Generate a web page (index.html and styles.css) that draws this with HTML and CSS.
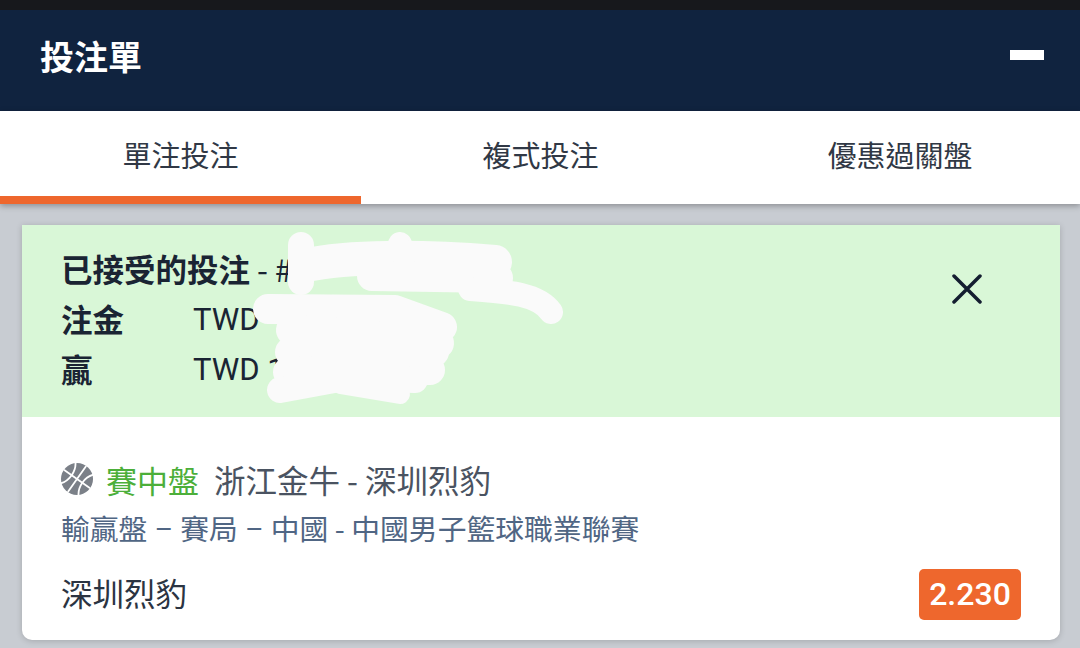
FILE: index.html

```html
<!DOCTYPE html>
<html lang="zh-Hant">
<head>
    <meta charset="UTF-8">
    <meta name="viewport" content="width=device-width, initial-scale=1.0">
    <title>投注單</title>
    <link rel="stylesheet" href="styles.css">
</head>
<body>
    <div class="topbar"></div>
    <header class="slip-header">
        <h1>投注單</h1>
        <span class="minimize"></span>
    </header>
    <nav class="tabs">
        <div class="tab active">單注投注</div>
        <div class="tab">複式投注</div>
        <div class="tab">優惠過關盤</div>
    </nav>
    <main class="content">
        <section class="card">
            <div class="accepted">
                <div class="accepted-info">
                    <div class="accepted-title"><strong>已接受的投注</strong> - #</div>
                    <div class="accepted-row"><strong>注金</strong><span>TWD</span></div>
                    <div class="accepted-row"><strong>贏</strong><span>TWD 1</span></div>
                </div>
                <svg class="close" viewBox="0 0 30 30" width="30" height="30">
                    <path d="M2 2 L28 28 M28 2 L2 28" stroke="#141e30" stroke-width="3.5" stroke-linecap="round" fill="none"/>
                </svg>
                <!-- hand drawn scribble hiding the numbers, viewBox is in page coordinates -->
                <svg class="scribble" viewBox="250 228 320 184" width="320" height="184">
                    <g stroke="#fafafa" stroke-linecap="round" stroke-linejoin="round" fill="none">
                        <path stroke-width="26" d="M301 245 V282"/>
                        <path stroke-width="24" d="M400 244 L402 270"/>
                        <path stroke-width="34" d="M312 264 C360 256 420 256 495 262"/>
                        <path stroke-width="30" d="M372 276 L498 278"/>
                        <path stroke-width="24" d="M470 289 C510 292 538 294 551 312"/>
                        <path stroke-width="30" d="M268 309 L395 310 L442 327"/>
                        <path stroke-width="32" d="M292 330 L438 343"/>
                        <path stroke-width="30" d="M290 352 L434 352"/>
                        <path stroke-width="30" d="M288 372 L430 370"/>
                        <path stroke-width="26" d="M280 390 L345 378 L415 380"/>
                        <path stroke-width="20" d="M340 384 L400 394"/>
                    </g>
                </svg>
            </div>
            <div class="bet">
                <div class="bet-match">
                    <svg class="ball" viewBox="0 0 32 32" width="32" height="32">
                        <circle cx="16" cy="16" r="16" fill="#7b8088"/>
                        <g transform="rotate(35 16 16)" stroke="#fff" stroke-width="1.8" fill="none">
                            <path d="M16 0 V32 M0 16 H32"/>
                            <path d="M5 3 C11 10 11 22 5 29"/>
                            <path d="M27 3 C21 10 21 22 27 29"/>
                        </g>
                    </svg>
                    <span class="live">賽中盤</span>
                    <span class="match-name">浙江金牛 - 深圳烈豹</span>
                </div>
                <div class="bet-market">輸贏盤 <span class="dash">−</span> 賽局 <span class="dash">−</span> 中國 - 中國男子籃球職業聯賽</div>
                <div class="bet-pick">
                    <span>深圳烈豹</span>
                    <span class="odds">2.230</span>
                </div>
            </div>
        </section>
    </main>
</body>
</html>
```

FILE: styles.css

```css
* {
    box-sizing: border-box;
}
html, body {
    margin: 0;
    height: 100%;
    overflow: hidden;
}
body {
    font-family: "Noto Sans CJK TC", "Noto Sans", sans-serif;
    background-color: #c8ccd2;
    color: #1a2433;
}
.topbar {
    height: 10px;
    background: #17181c;
}
.slip-header {
    height: 101px;
    background: #10233f;
    color: #fff;
    display: flex;
    align-items: center;
    justify-content: space-between;
    padding: 0 36px 0 40px;
}
.slip-header h1 {
    margin: 0 0 8px;
    font-size: 34px;
    line-height: 1.2;
    font-weight: 700;
}
.minimize {
    width: 34px;
    height: 10px;
    background: #fff;
    margin-bottom: 12px;
}
.tabs {
    height: 93px;
    display: grid;
    grid-template-columns: 361px 1fr 360px;
    background: #fff;
    box-shadow: 0 2px 6px rgba(0, 0, 0, 0.3);
}
.tab {
    font-size: 29px;
    line-height: 1;
    text-align: center;
    padding-top: 29px;
    color: #303845;
}
.tab.active {
    border-bottom: 8px solid #ee672d;
}
.content {
    padding: 21px 20px 0 22px;
}
.card {
    background: #fff;
    border-radius: 0 0 10px 10px;
    height: 415px;
    box-shadow: 0 1px 6px rgba(0, 0, 0, 0.18);
    overflow: hidden;
}
.accepted {
    position: relative;
    height: 192px;
    background: #d9f7d7;
    padding: 18px 39px;
    font-size: 31.5px;
    line-height: 50px;
}
.accepted strong {
    font-weight: 700;
}
.accepted-title {
    white-space: nowrap;
}
.accepted-row {
    display: grid;
    grid-template-columns: 132px 1fr;
}
.accepted-row span {
    font-family: "Roboto", sans-serif;
    font-size: 31px;
    line-height: 46px;
    padding-top: 4px;
}
.close {
    position: absolute;
    top: 49px;
    right: 78px;
}
.scribble {
    position: absolute;
    left: 228px;
    top: 3px;
}
.bet {
    padding: 37px 39px 0;
}
.bet-match {
    display: flex;
    align-items: center;
    height: 50px;
    font-size: 31px;
    white-space: nowrap;
}
.ball {
    margin-right: 13px;
    flex: none;
}
.live {
    color: #4caf3a;
    margin-right: 15px;
}
.match-name {
    color: #4a5361;
    font-size: 31.5px;
}
.bet-market {
    font-size: 28.8px;
    line-height: 46px;
    padding-top: 1px;
    color: #506684;
    white-space: nowrap;
}
.dash {
    margin: 0 2px;
}
.bet-pick {
    display: flex;
    align-items: center;
    justify-content: space-between;
    margin-top: 12px;
    font-size: 31.5px;
    color: #2b3442;
}
.odds {
    width: 102px;
    height: 51px;
    line-height: 51px;
    margin-top: 6px;
    text-align: center;
    border-radius: 5px;
    background: #ee672d;
    color: #fff;
    font-family: "Roboto", sans-serif;
    font-weight: 500;
    font-size: 32px;
}
```
